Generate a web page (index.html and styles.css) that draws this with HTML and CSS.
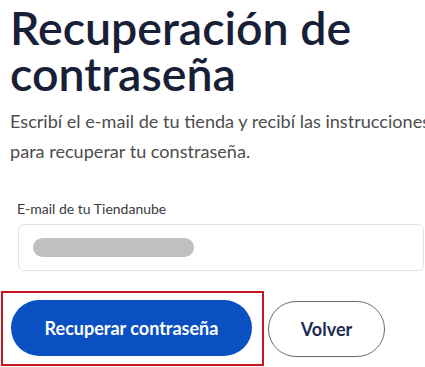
FILE: index.html
```html
<!DOCTYPE html>
<html lang="es">

<head>
    <meta charset="UTF-8" />
    <title>Recuperación de contraseña</title>
    <link rel="stylesheet" href="styles.css">
</head>

<body>
    <div class="page">
        <h1>Recuperación de<br>contraseña</h1>

        <p class="intro">Escribí el e-mail de tu tienda y recibí las instrucciones<br>para recuperar tu constraseña.</p>

        <form class="recover-form" onsubmit="return false">
            <label class="field-label" for="email">E-mail de tu Tiendanube</label>
            <div class="field" id="email">
                <span class="blurred"></span>
            </div>

            <div class="actions">
                <div class="highlight">
                    <button type="submit" class="btn btn-primary">Recuperar contraseña</button>
                </div>
                <button type="button" class="btn btn-outline">Volver</button>
            </div>
        </form>
    </div>
</body>

</html>
```

FILE: styles.css
```css
html,
body {
    margin: 0;
    padding: 0;
    background-color: #ffffff;
    overflow: hidden;
}

body {
    font-family: "Lato", "Liberation Sans", sans-serif;
    color: #1a2540;
}

.page {
    padding: 0 0 0 10px;
}

h1 {
    margin: 0;
    padding-top: 4px;
    font-size: 46.5px;
    line-height: 46px;
    font-weight: 600;
    color: #172036;
}

.intro {
    margin: 10px 0 0;
    font-size: 18.1px;
    line-height: 30px;
    color: #4d4d4d;
    white-space: nowrap;
    overflow: hidden;
}

.recover-form {
    margin-top: 34px;
}

.field-label {
    display: block;
    margin-left: 7px;
    font-size: 14px;
    color: #3a3a3a;
}

.field {
    display: flex;
    align-items: center;
    box-sizing: border-box;
    width: 406px;
    height: 47px;
    margin: 7px 0 0 8px;
    padding-left: 14px;
    border: 1px solid #e4e4e4;
    border-radius: 6px;
}

.blurred {
    display: block;
    width: 161px;
    height: 19px;
    border-radius: 10px;
    background-color: #c0c0c0;
}

.actions {
    display: flex;
    align-items: center;
    gap: 4px;
    margin: 20px 0 0 -9px;
}

.highlight {
    padding: 7px 10px 8px 8px;
    border: 2px solid #c8151f;
}

.btn {
    font-family: "Lato", "Liberation Sans", sans-serif;
    font-size: 18px;
    font-weight: 700;
    border-radius: 28px;
    cursor: pointer;
}

.btn-primary {
    display: block;
    width: 241px;
    height: 56px;
    border: none;
    background-color: #0a50c2;
    color: #ffffff;
}

.btn-outline {
    width: 117px;
    height: 56px;
    border: 1px solid #6a6a6a;
    background-color: #ffffff;
    color: #1e2b55;
}
```
